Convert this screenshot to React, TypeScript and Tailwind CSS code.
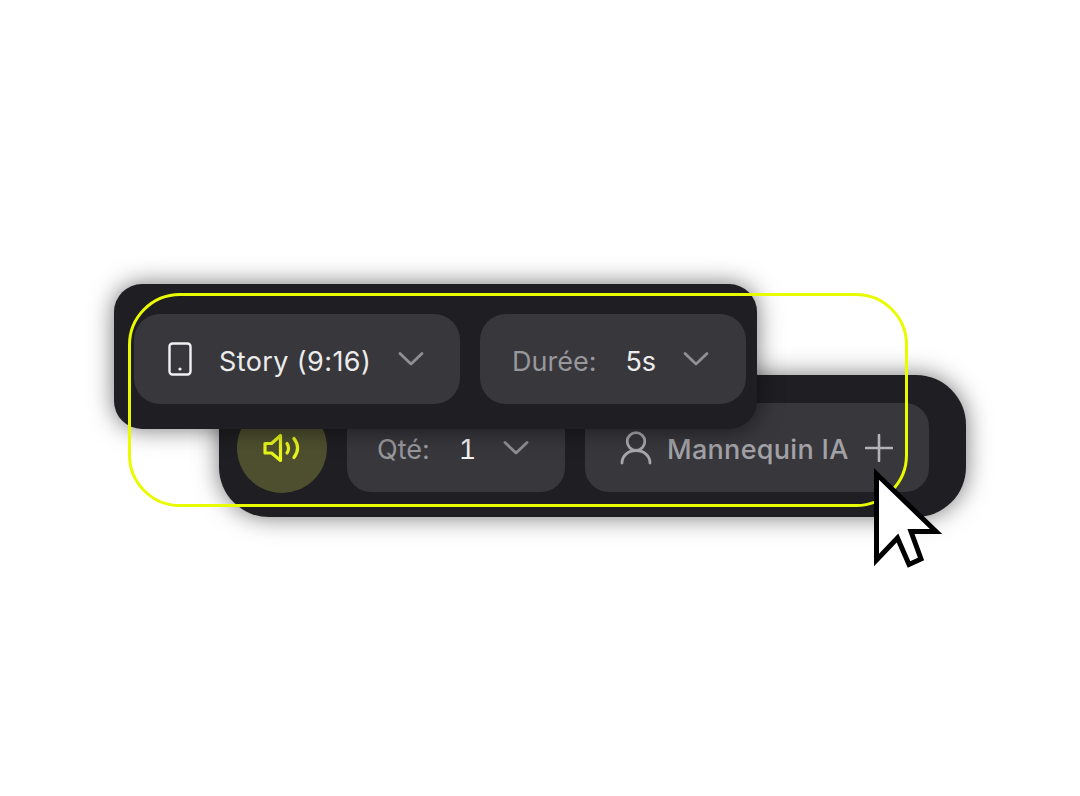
import React from 'react'

const font = { fontFamily: 'Inter, "Noto Sans", sans-serif' }

function Chevron({ className = '' }: { className?: string }) {
  return (
    <svg width="26" height="16" viewBox="0 0 26 16" fill="none" className={className}>
      <path d="M2 2.5 L13 13 L24 2.5" stroke="#8f8f94" strokeWidth="2.8" strokeLinecap="round" strokeLinejoin="round" />
    </svg>
  )
}

export default function App() {
  return (
    <div className="relative h-[796px] w-[1080px] overflow-hidden bg-white pt-[284px]" style={font}>
      {/* Top bar */}
      <div className="relative z-10 ml-[114px] flex h-[145px] w-[643px] gap-5 rounded-[28px] bg-[#1f1f23] pl-5 pt-[30px] shadow-[0_0_24px_rgba(0,0,0,0.55)]">
        <div className="flex h-[90px] w-[326px] items-center rounded-[26px] bg-[#37373c] pl-[34px]">
          <svg width="24" height="34" viewBox="0 0 24 34" fill="none">
            <rect x="1.5" y="1.5" width="21" height="31" rx="3" stroke="#f2f2f2" strokeWidth="2.4" />
            <circle cx="12" cy="27" r="1.6" fill="#f2f2f2" />
          </svg>
          <span className="ml-[27px] translate-y-[2px] text-[27px] leading-none tracking-[0.4px] text-[#ececec]">Story (9:16)</span>
          <Chevron className="ml-[27px]" />
        </div>
        <div className="flex h-[90px] w-[266px] items-center rounded-[26px] bg-[#37373c] pl-8">
          <span className="translate-y-[2px] text-[27px] leading-none text-[#98989c]">Durée:</span>
          <span className="ml-[29px] translate-y-[2px] text-[27px] leading-none text-[#ececec]">5s</span>
          <Chevron className="ml-[27px]" />
        </div>
      </div>

      {/* Bottom bar, tucked under the top one */}
      <div className="ml-[219px] -mt-[54px] flex h-[142px] w-[747px] gap-5 rounded-[50px] bg-[#1f1f23] pl-[18px] pt-7 shadow-[0_0_24px_rgba(0,0,0,0.55)]">
        <div className="flex h-[90px] w-[90px] items-center justify-center rounded-full bg-[#4d4f2e]">
          <svg width="38" height="30" viewBox="0 0 38 30" fill="none">
            <path d="M2 10.5 H8.5 L17.5 2.5 V27.5 L8.5 20 H2 Z" stroke="#e6f51a" strokeWidth="3.2" strokeLinejoin="round" />
            <path d="M24 10.5 C26 13.5 26 17 24 20" stroke="#e6f51a" strokeWidth="3.2" strokeLinecap="round" />
            <path d="M31 5.5 C35.5 11.5 35.5 18.5 31 24.5" stroke="#e6f51a" strokeWidth="3.2" strokeLinecap="round" />
          </svg>
        </div>
        <div className="flex h-[89px] w-[218px] items-center rounded-[24px] bg-[#37373c] pl-[30px]">
          <span className="translate-y-[2px] text-[27px] leading-none text-[#98989c]">Qté:</span>
          <span className="ml-[29px] translate-y-[2px] text-[27px] leading-none text-[#f2f2f2] tabular-nums">1</span>
          <Chevron className="ml-[27px]" />
        </div>
        <div className="flex h-[89px] w-[344px] items-center rounded-[24px] bg-[#37373c] pl-[35px]">
          <svg width="32" height="34" viewBox="0 0 32 34" fill="none">
            <circle cx="16" cy="10.5" r="8.8" stroke="#a8a8ac" strokeWidth="2.8" />
            <path d="M2 32 C2 25 8 19.5 16 19.5 C24 19.5 30 25 30 32" stroke="#a8a8ac" strokeWidth="2.8" strokeLinecap="round" />
          </svg>
          <span className="ml-[15px] translate-y-[2px] text-[27px] font-medium leading-none tracking-[0.3px] text-[#a2a2a6]">Mannequin IA</span>
          <svg width="28" height="28" viewBox="0 0 28 28" fill="none" className="ml-[16px]">
            <path d="M14 1 V27 M1 14 H27" stroke="#b4b4b8" strokeWidth="2.6" strokeLinecap="round" />
          </svg>
        </div>
      </div>

      {/* Yellow highlight frame */}
      <div className="pointer-events-none absolute left-[128px] top-[293px] z-20 h-[214px] w-[780px] rounded-[52px] border-[3px] border-[#e9fb00]" />

      {/* Cursor */}
      <svg width="74" height="106" viewBox="0 0 74 106" className="absolute left-[872px] top-[468px] z-30">
        <path d="M4.5 6 L64 63.5 L39 63.5 L49 91 L37 96.5 L25.5 70 L4.5 92 Z" fill="#ffffff" stroke="#000000" strokeWidth="5" strokeLinejoin="miter" />
      </svg>
    </div>
  )
}
